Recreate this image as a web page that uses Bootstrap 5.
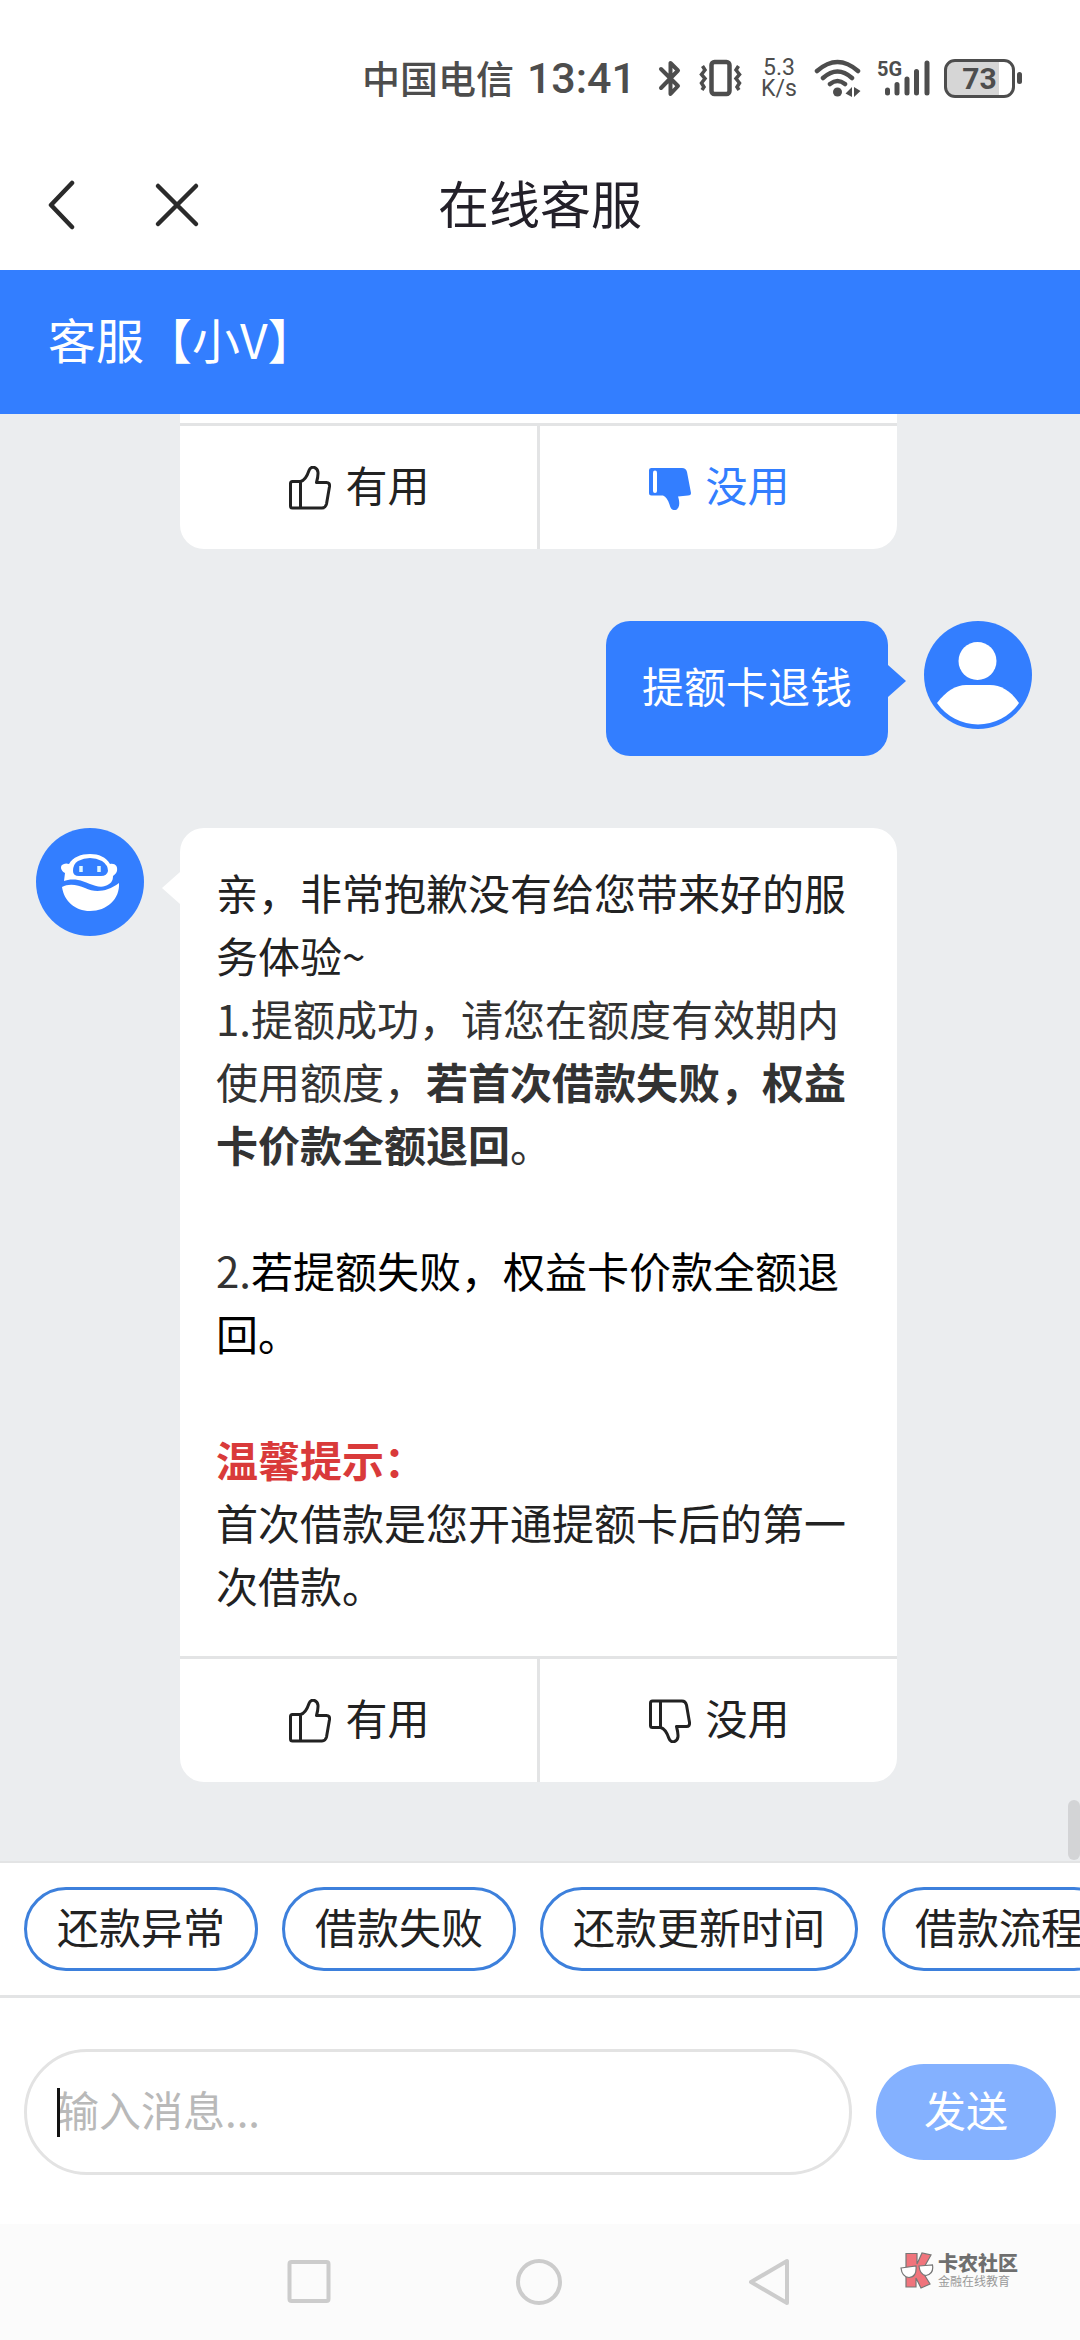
<!DOCTYPE html>
<html lang="zh-CN">
<head>
<meta charset="utf-8">
<meta name="viewport" content="width=device-width, initial-scale=1">
<title>在线客服</title>
<link href="https://cdn.jsdelivr.net/npm/bootstrap@5.3.0/dist/css/bootstrap.min.css" rel="stylesheet">
<style>
  :root { --brand: #337eff; --ink: #222; --rule: #e3e4e5; --page: #ebedef; }
  body { font-family: "Noto Sans CJK SC", sans-serif; font-size: 42px; line-height: 63px; color: var(--ink); background: #fff; }
  svg { display: block; flex: none; }
  button { font: inherit; color: inherit; }

  .status-bar { height: 140px; padding: 16px 58px 0 0; color: #4d4d4d; }
  .carrier { font-size: 38px; line-height: 48px; font-weight: 500; margin-right: 13px; padding-bottom: 3px; }
  .clock { font: 500 43px/48px Roboto, sans-serif; margin-right: 22px; }
  .net-speed { font: 400 23px/21px Roboto, sans-serif; width: 36px; margin: 0 17px 0 18px; }
  .net-label { font: 700 20px/20px Roboto, sans-serif; left: -1px; top: 0; }
  .signal { margin: 0 13px 0 17px; }
  .battery-box { width: 71px; height: 39px; border: 3px solid #4d4d4d; border-radius: 11px; background: linear-gradient(to right, #d6d6d6 80%, #fff 80%); font: 700 30px/33px Roboto, sans-serif; }
  .battery-tip { width: 5px; height: 12px; border-radius: 3px; background: #4d4d4d; margin-left: 2px; }

  .title-bar { height: 130px; padding: 0 44px; }
  .title-bar h1 { font-size: 51px; line-height: 66px; color: #232029; padding-bottom: 7px; }
  .side-group { gap: 76px; flex: 1 0 0; }
  .plain-btn { border: 0; background: none; padding: 0; }

  .agent-bar { height: 144px; padding: 0 48px 9px; background: var(--brand); font-size: 48px; line-height: 72px; }

  .chat-area { background: var(--page); padding-bottom: 78px; }
  .chat-stack { gap: 72px; }
  .bot-row { padding: 0 183px 0 36px; gap: 36px; }
  .avatar-slot { width: 108px; flex: none; }
  .user-row { padding: 0 48px 0 36px; gap: 36px; }
  .bot-bubble { background: #fff; border-radius: 24px; }
  .bot-bubble.cut-top { border-radius: 0 0 24px 24px; padding-top: 9px; }
  .bubble-text { padding: 32px 36px 40px; }
  .user-bubble { background: var(--brand); color: #fff; border-radius: 24px; padding: 32px 36px 40px; }
  .bot-bubble.tailed::before, .user-bubble::after { content: ""; position: absolute; top: 44px; border: 16px solid transparent; }
  .bot-bubble.tailed::before { left: -18px; border-left: 0; border-right: 18px solid #fff; }
  .user-bubble::after { right: -18px; border-right: 0; border-left: 18px solid var(--brand); }
  .softer { color: #333; }
  .warm { color: #d93a3a; }
  .vote-row { border-top: 3px solid var(--rule); }
  .vote-row button { height: 123px; gap: 14px; flex: 1 0 0; padding-left: 2px; }
  .vote-row .vote-label { padding-bottom: 8px; }
  .vote-row button + button { border-left: 3px solid var(--rule); }
  .vote-row button.chosen { color: var(--brand); }
  .scroll-thumb { width: 12px; height: 60px; right: 0; bottom: 1px; border-radius: 6px; background: #d3d4d6; }

  .quick-bar { border-top: 2px solid var(--rule); border-bottom: 3px solid var(--rule); padding: 24px; gap: 24px; }
  .chip { flex: none; height: 84px; padding: 0 30px 8px; border: 3px solid #3d80dc; border-radius: 42px; background: #fff; }

  .compose { padding: 51px 24px 49px; gap: 24px; }
  .msg-box { width: 100%; height: 126px; border: 3px solid #e3e3e3; border-radius: 63px; padding: 0 30px 8px; outline: 0; background: #fff; }
  .msg-box::placeholder { color: #b9b9b9; opacity: 1; }
  .caret-bar { left: 33px; top: 39px; width: 3px; height: 49px; background: #111; }
  .send-btn { flex: none; width: 180px; height: 96px; border: 0; border-radius: 48px; background: #84b1ff; color: #fff; padding: 0 0 8px; }

  .nav-keys { height: 116px; background: #fbfbfb; padding: 0 62px 0 287px; }
  .key-group { gap: 184px; }
  .mark-name { font-size: 20px; line-height: 22px; font-weight: 900; color: #6f6f6f; }
  .mark-sub { font-size: 12px; line-height: 14px; color: #999; }
  .site-mark { gap: 4px; padding-bottom: 24px; }
</style>
</head>
<body class="d-flex flex-column min-vh-100 overflow-x-hidden">

<svg width="0" height="0" class="position-absolute" aria-hidden="true">
  <symbol id="thumb" viewBox="0 0 42 44">
    <path d="M1.500 17.500Q1.500 15.500 3.500 15.500H11.500C15.500 14.500 18.500 9 20 4.500C21 1.500 23.500.800 25.500 1.500C29.500 3 30 7 27.500 16.500H37.500Q41 16.500 40.500 20.500L37.500 38Q36.500 42 33 42H3.500Q1.500 42 1.500 40ZM11.500 15.500V42" fill="none" stroke="currentColor" stroke-width="3" stroke-linejoin="round"/>
  </symbol>
</svg>

<header>
  <div class="status-bar d-flex align-items-center justify-content-end">
    <span class="carrier">中国电信</span>
    <span class="clock">13:41</span>
    <svg width="24" height="37" viewBox="0 0 24 37" fill="none" stroke="#4d4d4d" stroke-width="4" stroke-linejoin="round" stroke-linecap="round"><path d="M3 9L20 26L12.500 34V22M3 28L20 10.500L12.500 3V14"/></svg>
    <svg class="ms-3" width="45" height="38" viewBox="0 0 45 38" fill="none" stroke="#4d4d4d"><rect x="13.500" y="3" width="18" height="32" rx="3" stroke-width="4.500"/><path d="M4.500 7L7 11L3.500 15.500L7 19.500L3.500 24L6 28L4 31M40.500 7L38 11L41.500 15.500L38 19.500L41.500 24L39 28L41 31" stroke-width="3.500"/></svg>
    <span class="net-speed text-center">5.3<br>K/s</span>
    <svg width="47" height="38" viewBox="0 0 47 38" fill="none" stroke="#4d4d4d" stroke-width="4.500" stroke-linecap="round"><path d="M3 12Q23.500-6 44 12M9 19Q23.500 6 38 19M16 25Q23.500 19 31 25"/><circle cx="23.500" cy="33" r="4.500" fill="#4d4d4d" stroke="none"/><path d="M38 28V38L31.500 34.500ZM40 38V28L46.500 32Z" fill="#4d4d4d" stroke="none"/></svg>
    <span class="signal position-relative">
      <span class="net-label position-absolute">5G</span>
      <svg width="53" height="38" viewBox="0 0 53 38" stroke="#4d4d4d" stroke-width="5" stroke-linecap="round"><path d="M9.500 31V34M19 25.500V34M29 20V34M38.500 12.500V34M49 4V34"/></svg>
    </span>
    <span class="battery-box text-center">73</span><span class="battery-tip"></span>
  </div>
  <div class="title-bar d-flex align-items-center">
    <div class="side-group d-flex align-items-center">
      <button type="button" class="plain-btn" aria-label="返回"><svg width="34" height="50" viewBox="0 0 34 50" fill="none" stroke="#2a2a2a" stroke-width="4.500" stroke-linecap="round" stroke-linejoin="round"><path d="M28 3L7 25L28 47"/></svg></button>
      <button type="button" class="plain-btn" aria-label="关闭"><svg width="46" height="46" viewBox="0 0 46 46" fill="none" stroke="#2a2a2a" stroke-width="4.500" stroke-linecap="round"><path d="M4 4L42 42M42 4L4 42"/></svg></button>
    </div>
    <h1 class="m-0 fw-normal">在线客服</h1>
    <div class="side-group"></div>
  </div>
  <div class="agent-bar d-flex align-items-center text-white">客服【小V】</div>
</header>

<main class="chat-area flex-grow-1 position-relative">
  <div class="chat-stack d-flex flex-column">
    <article class="bot-row d-flex">
      <div class="avatar-slot"></div>
      <div class="bot-bubble cut-top flex-grow-1">
        <div class="vote-row d-flex">
          <button type="button" class="plain-btn d-flex align-items-center justify-content-center"><svg width="42" height="44"><use href="#thumb"/></svg><span class="vote-label">有用</span></button>
          <button type="button" class="plain-btn chosen d-flex align-items-center justify-content-center"><svg width="42" height="44" viewBox="0 0 42 44"><path d="M0 4Q0 2 2.500 2H33Q37 2 38 6L42 27Q42 29.500 39 29.500L29 30.500C31 36 31 43 26.500 44C22.500 44.500 21.500 42 20.500 38.500C19 34 17 30.500 14 29.500H2.500Q0 29.500 0 27Z" fill="currentColor"/><path d="M6 6.500V25" stroke="#fff" stroke-width="4" stroke-linecap="round"/></svg><span class="vote-label">没用</span></button>
        </div>
      </div>
    </article>

    <article class="user-row d-flex justify-content-end align-items-start">
      <div class="user-bubble position-relative">提额卡退钱</div>
      <svg width="108" height="108" viewBox="0 0 108 108"><circle cx="54" cy="54" r="54" fill="#337eff"/><circle cx="53.500" cy="40" r="19" fill="#fff"/><path d="M13 82C22 70 32 64 42 64H66C77 64 87 70 95 82A50 50 0 0 1 13 82Z" fill="#fff"/></svg>
    </article>

    <article class="bot-row d-flex align-items-start">
      <svg class="avatar-slot" height="108" viewBox="0 0 108 108"><circle cx="54" cy="54" r="54" fill="#337eff"/><path d="M33 36C37 29 45 26 54 26S70 29 74 36C79 35 82 38 81 43C80 46 78 47 77 48C77 53 75 56 69 58C61 61 50 53 42 52C36 51 31 52 28 53L29 45C25 43 24 39 26 37Q29 34.500 33 36Z" fill="#fff"/><path d="M42 33Q54 27 66 33Q72 37 72 43Q71 48 65 48H43Q37 48 37 43Q37 36 42 33Z" fill="#337eff"/><path d="M45 38V44M63 38V44" stroke="#dff6ff" stroke-width="3.500"/><path d="M26 59C33 55 42 57 49 60C59 65 71 64 83 55C84 71 71 83 54 83C39 83 28 73 26 59Z" fill="#fff"/></svg>
      <div class="bot-bubble tailed position-relative flex-grow-1">
        <div class="bubble-text">
          <div>亲，非常抱歉没有给您带来好的服务体验~</div>
          <div class="softer">1.提额成功，请您在额度有效期内使用额度，<b>若首次借款失败，权益卡价款全额退回</b>。</div>
          <br>
          <div class="text-black"><span class="softer">2.</span>若提额失败，权益卡价款全额退回。</div>
          <br>
          <div class="warm fw-bold">温馨提示：</div>
          <div>首次借款是您开通提额卡后的第一次借款。</div>
        </div>
        <div class="vote-row d-flex">
          <button type="button" class="plain-btn d-flex align-items-center justify-content-center"><svg width="42" height="44"><use href="#thumb"/></svg><span class="vote-label">有用</span></button>
          <button type="button" class="plain-btn d-flex align-items-center justify-content-center"><svg width="42" height="44" viewBox="0 0 42 44"><g transform="matrix(1 0 0 -1 0 44)"><use href="#thumb" width="42" height="44"/></g></svg><span class="vote-label">没用</span></button>
        </div>
      </div>
    </article>
  </div>
  <div class="scroll-thumb position-absolute"></div>
</main>

<footer>
  <div class="quick-bar d-flex overflow-hidden text-nowrap">
    <button type="button" class="chip">还款异常</button>
    <button type="button" class="chip">借款失败</button>
    <button type="button" class="chip">还款更新时间</button>
    <button type="button" class="chip">借款流程</button>
  </div>
  <form class="compose d-flex align-items-center">
    <div class="position-relative flex-grow-1">
      <input type="text" class="msg-box d-block" placeholder="输入消息..." aria-label="输入消息">
      <span class="caret-bar position-absolute"></span>
    </div>
    <button type="button" class="send-btn">发送</button>
  </form>
  <div class="nav-keys d-flex align-items-center justify-content-between">
    <div class="key-group d-flex align-items-center">
      <button type="button" class="plain-btn" aria-label="最近任务"><svg width="44" height="48" viewBox="0 0 44 48" fill="none" stroke="#ccc" stroke-width="4"><rect x="2.500" y="4" width="39" height="39" rx="2"/></svg></button>
      <button type="button" class="plain-btn" aria-label="主屏幕"><svg width="48" height="48" viewBox="0 0 48 48" fill="none" stroke="#ccc" stroke-width="4"><circle cx="24" cy="24" r="21"/></svg></button>
      <button type="button" class="plain-btn" aria-label="返回上一级"><svg width="44" height="48" viewBox="0 0 44 48" fill="none" stroke="#ccc" stroke-width="4" stroke-linejoin="round"><path d="M40 3V45L4 24Z"/></svg></button>
    </div>
    <div class="site-mark d-flex align-items-center">
      <svg width="34" height="37" viewBox="0 0 34 37" stroke="#777" stroke-width="1.200"><path d="M6 1.500H17V12L22 1L31 3L22 19L30 32L21 36L16 26V35H6Z" fill="#f0747c"/><path d="M1 16L16 14Q17 25 9 25.500Q2 25 1 16ZM19 14L32.500 13Q34 22 26 23.500Q20 23 19 14Z" fill="#fff"/></svg>
      <div>
        <div class="mark-name">卡农社区</div>
        <div class="mark-sub">金融在线教育</div>
      </div>
    </div>
  </div>
</footer>
<script src="https://cdn.jsdelivr.net/npm/bootstrap@5.3.0/dist/js/bootstrap.bundle.min.js"></script>
</body>
</html>
